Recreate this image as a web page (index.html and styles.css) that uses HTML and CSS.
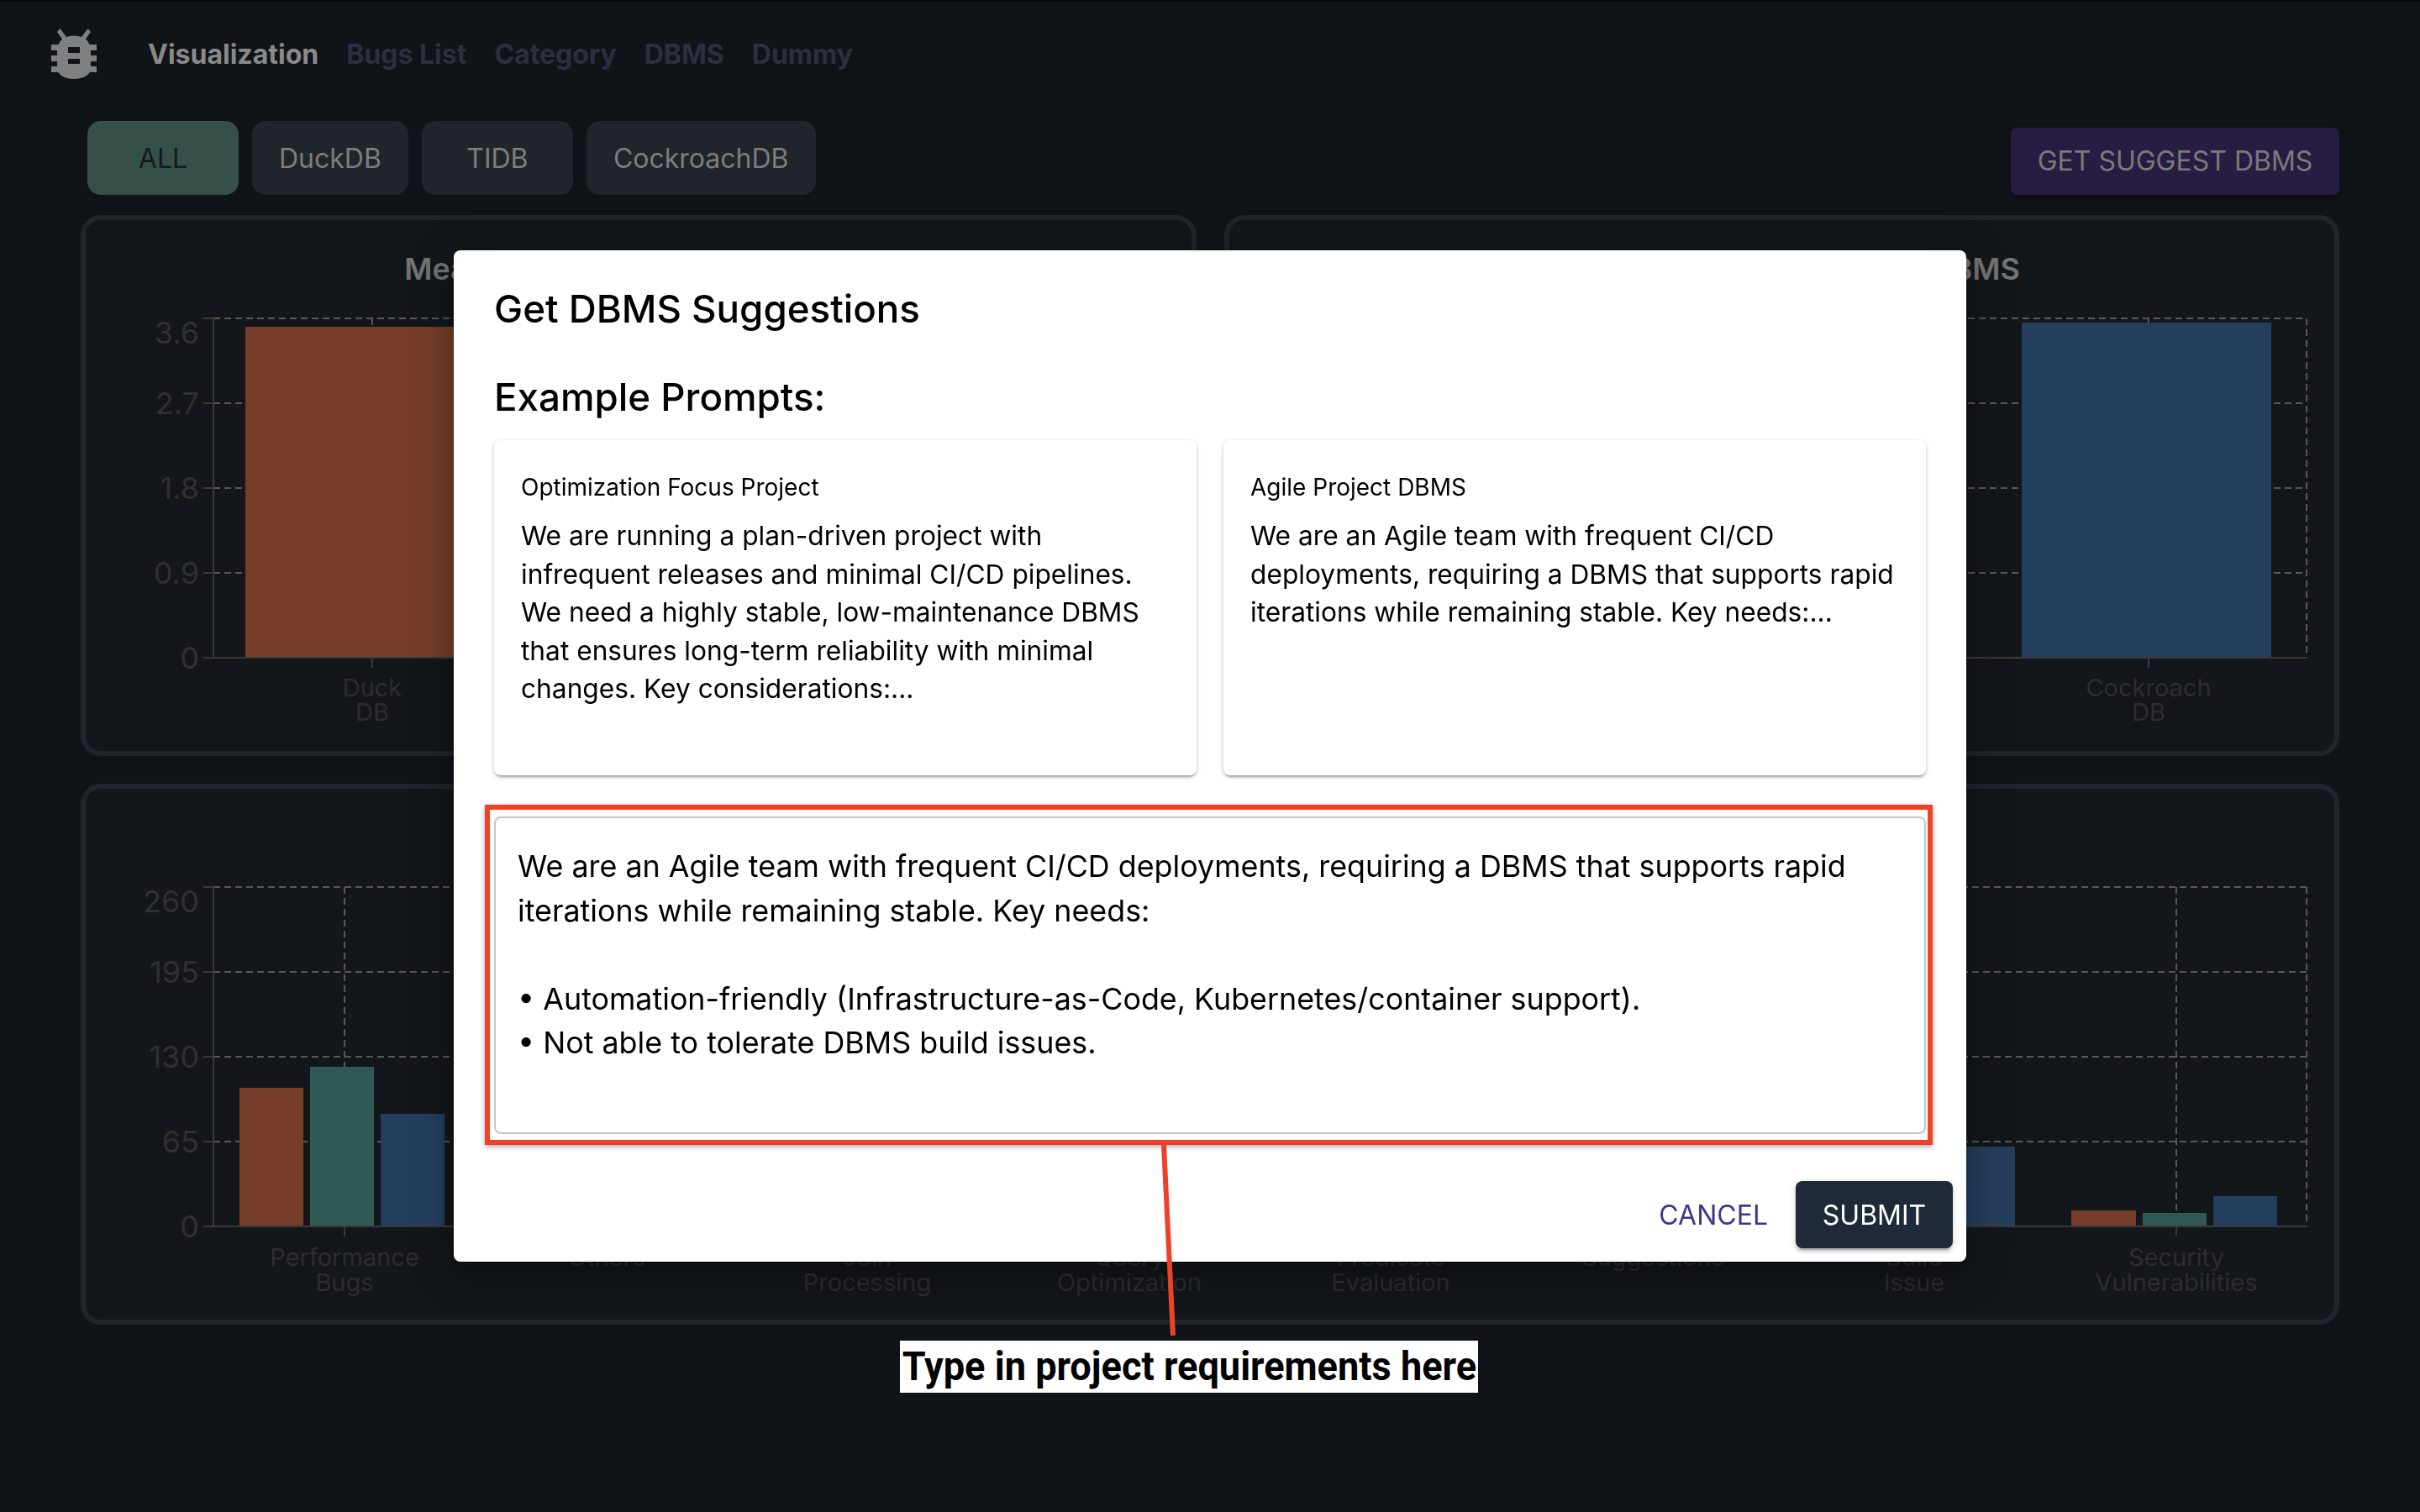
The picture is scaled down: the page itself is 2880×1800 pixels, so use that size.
FILE: index.html
```html
<!DOCTYPE html>
<html>
<head>
    <title>DBMS Bugs Visualization</title>
    <link rel="stylesheet" href="styles.css">
</head>
<body>
    <nav class="navbar">
        <svg class="logo" viewBox="0 0 54 60">
            <path fill-rule="evenodd" d="M7 4 L10.500 0 L18 10 Q22 8.500 27 8.500 Q32 8.500 36 10 L43.500 0 L47 4 L41 12.500 Q44 15 45.500 19 L54 19 L54 26 L47 26 L47 32 L54 32 L54 39 L47 39 L47 45 L54 45 L54 52 L46 52 Q40 60 27 60 Q14 60 8 52 L0 52 L0 45 L7 45 L7 39 L0 39 L0 32 L7 32 L7 26 L0 26 L0 19 L8.500 19 Q10 15 13 12.500 Z M20 22 L20 29 L34 29 L34 22 Z M20 36 L20 42 L34 42 L34 36 Z"/>
        </svg>
        <a class="nav-link active">Visualization</a>
        <a class="nav-link">Bugs List</a>
        <a class="nav-link">Category</a>
        <a class="nav-link">DBMS</a>
        <a class="nav-link">Dummy</a>
    </nav>

    <div class="toolbar">
        <div class="filters">
            <button class="filter selected">ALL</button>
            <button class="filter">DuckDB</button>
            <button class="filter">TIDB</button>
            <button class="filter">CockroachDB</button>
        </div>
        <button class="suggest-btn">GET SUGGEST DBMS</button>
    </div>

    <div class="charts">
        <section class="chart-card">
            <h3 class="chart-title">Mean Time to Fix Bugs (in Days)</h3>
            <svg class="chart" viewBox="102 338 1316 556">
                <path class="grid" d="M254 379H1385M254 480H1385M254 581H1385M254 682H1385M443 379V783M820 379V783M1197 379V783M1385 379V783"/>
                <rect class="bar orange" x="292" y="389" width="298" height="394"/>
                <path class="axis" d="M242 379H254V783M242 480H254M242 581H254M242 682H254M242 783H1385M443 783V795"/>
                <text class="y-label" x="237" y="396">3.6</text>
                <text class="y-label" x="237" y="480">2.7</text>
                <text class="y-label" x="237" y="581">1.8</text>
                <text class="y-label" x="237" y="682">0.9</text>
                <text class="y-label" x="237" y="783">0</text>
                <text class="x-label" x="443" y="829">Duck</text>
                <text class="x-label" x="443" y="858">DB</text>
            </svg>
        </section>
        <section class="chart-card">
            <h3 class="chart-title">Number of Bugs Found by DBMS</h3>
            <svg class="chart" viewBox="1463 338 1316 556">
                <path class="grid" d="M1614 379H2745M1614 480H2745M1614 581H2745M1614 682H2745M2557 379V783M2745 379V783"/>
                <rect class="bar blue" x="2406" y="384" width="297" height="399"/>
                <path class="axis" d="M1614 783H2745M2557 783V795"/>
                <text class="x-label" x="2557" y="829">Cockroach</text>
                <text class="x-label" x="2557" y="858">DB</text>
            </svg>
        </section>
        <section class="chart-card wide">
            <svg class="chart wide-chart" viewBox="102 1015 2676 556">
                <path class="grid" d="M254 1056H2745M254 1157H2745M254 1258H2745M254 1359H2745M410 1056V1460M2590 1056V1460M2745 1056V1460"/>
                <rect class="bar orange" x="285" y="1295" width="76" height="165"/>
                <rect class="bar green" x="369" y="1270" width="76" height="190"/>
                <rect class="bar blue" x="453" y="1326" width="76" height="134"/>
                <rect class="bar blue" x="2322" y="1365" width="76" height="95"/>
                <rect class="bar orange" x="2465" y="1441" width="77" height="19"/>
                <rect class="bar green" x="2550" y="1444" width="76" height="16"/>
                <rect class="bar blue" x="2634" y="1424" width="76" height="36"/>
                <path class="axis" d="M242 1056H254V1460M242 1157H254M242 1258H254M242 1359H254M242 1460H2745M410 1460V1472M2590 1460V1472"/>
                <text class="y-label" x="237" y="1073">260</text>
                <text class="y-label" x="237" y="1157">195</text>
                <text class="y-label" x="237" y="1258">130</text>
                <text class="y-label" x="237" y="1359">65</text>
                <text class="y-label" x="237" y="1460">0</text>
                <text class="x-label" x="410" y="1506.500">Performance</text>
                <text class="x-label" x="410" y="1536.500">Bugs</text>
                <text class="x-label" x="722" y="1506.500">Others</text>
                <text class="x-label" x="1032" y="1506.500">Join</text>
                <text class="x-label" x="1032" y="1536.500">Processing</text>
                <text class="x-label" x="1344" y="1506.500">Query</text>
                <text class="x-label" x="1344" y="1536.500">Optimization</text>
                <text class="x-label" x="1655" y="1506.500">Predicate</text>
                <text class="x-label" x="1655" y="1536.500">Evaluation</text>
                <text class="x-label" x="1967" y="1506.500">Suggestions</text>
                <text class="x-label" x="2278" y="1506.500">Build</text>
                <text class="x-label" x="2278" y="1536.500">Issue</text>
                <text class="x-label" x="2590" y="1506.500">Security</text>
                <text class="x-label" x="2590" y="1536.500">Vulnerabilities</text>
            </svg>
        </section>
    </div>

    <div class="dialog-layer">
        <div class="dialog">
            <h2 class="dialog-title">Get DBMS Suggestions</h2>
            <h2 class="dialog-subtitle">Example Prompts:</h2>
            <div class="prompts">
                <div class="prompt-card">
                    <div class="prompt-name">Optimization Focus Project</div>
                    <p class="prompt-text">We are running a plan-driven project with infrequent releases and minimal CI/CD pipelines. We need a highly stable, low-maintenance DBMS that ensures long-term reliability with minimal changes. Key considerations:...</p>
                </div>
                <div class="prompt-card">
                    <div class="prompt-name">Agile Project DBMS</div>
                    <p class="prompt-text">We are an Agile team with frequent CI/CD deployments, requiring a DBMS that supports rapid iterations while remaining stable. Key needs:...</p>
                </div>
            </div>
            <div class="prompt-input">We are an Agile team with frequent CI/CD deployments, requiring a DBMS that supports rapid iterations while remaining stable. Key needs:

• Automation-friendly (Infrastructure-as-Code, Kubernetes/container support).
• Not able to tolerate DBMS build issues.</div>
            <div class="dialog-actions">
                <button class="cancel-btn">CANCEL</button>
                <button class="submit-btn">SUBMIT</button>
            </div>
        </div>
    </div>

    <div class="callout-box"></div>
    <svg class="callout-line" viewBox="0 0 20 230"><line x1="4" y1="0" x2="15" y2="227"/></svg>
    <div class="callout-label"><span class="callout-text">Type in project requirements here</span></div>
</body>
</html>
```

FILE: styles.css
```css
* {
    box-sizing: border-box;
}
html, body {
    margin: 0;
    height: 1800px;
    overflow: hidden;
}
body {
    position: relative;
    background-color: #101419;
    font-family: Inter, "Liberation Sans", sans-serif;
}
button {
    font-family: inherit;
    border: none;
    cursor: pointer;
}

/* nav */
.navbar {
    display: flex;
    align-items: center;
    height: 126px;
    padding-left: 61px;
    gap: 33px;
    border-top: 2px solid #05070a;
}
.logo {
    width: 54px;
    height: 60px;
    margin-right: 28px;
    fill: #808080;
}
.nav-link {
    font-size: 32px;
    font-weight: 700;
    color: #2b303c;
}
.nav-link.active {
    color: #8a8a8a;
}

/* filters */
.toolbar {
    display: flex;
    justify-content: space-between;
    align-items: flex-end;
    height: 88px;
    margin-top: 18px;
    padding: 0 96px 0 104px;
}
.filters {
    display: flex;
    gap: 16px;
}
.filter {
    min-width: 180px;
    height: 88px;
    padding: 0 32px;
    font-size: 32px;
    color: #7d7d7d;
    background-color: #20252b;
    border-radius: 16px;
}
.filter.selected {
    color: #15191c;
    background-color: #345048;
}
.suggest-btn {
    height: 80px;
    width: 391px;
    padding-bottom: 2px;
    font-size: 32px;
    color: #7a7a7a;
    background-color: #271c42;
    border-radius: 8px;
    box-shadow: 0 4px 10px rgba(0, 0, 0, 0.3);
}

/* charts */
.charts {
    display: grid;
    grid-template-columns: 1328px 1327px;
    gap: 33px;
    margin: 24px 96px 0;
}
.chart-card {
    height: 644px;
    padding-top: 40px;
    background-color: #13171b;
    border: 6px solid #1f252b;
    border-radius: 24px;
    overflow: hidden;
}
.chart-card.wide {
    grid-column: 1 / 3;
    padding-top: 76px;
}
.chart-title {
    margin: 0;
    font-size: 36px;
    line-height: 36px;
    font-weight: 600;
    color: #747474;
    text-align: center;
}
.chart {
    display: block;
    width: 1316px;
    height: 556px;
}
.wide-chart {
    width: 2676px;
}
.grid {
    fill: none;
    stroke: #585858;
    stroke-width: 2;
    stroke-dasharray: 8 5;
}
.axis {
    fill: none;
    stroke: #393939;
    stroke-width: 2;
}
.bar.orange {
    fill: #763e2a;
}
.bar.green {
    fill: #2f5a54;
}
.bar.blue {
    fill: #243f5e;
}
.y-label {
    font-size: 36px;
    fill: #303030;
    text-anchor: end;
    dominant-baseline: central;
}
.x-label {
    font-size: 29px;
    fill: #2c2d30;
    text-anchor: middle;
}

/* dialog */
.dialog-layer {
    position: fixed;
    inset: 0;
    display: flex;
    align-items: center;
    justify-content: center;
}
.dialog {
    width: 1800px;
    height: 1204px;
    padding: 40px 48px 16px;
    background-color: #fff;
    border-radius: 8px;
    box-shadow: 0 11px 15px -7px rgba(0, 0, 0, 0.2), 0 24px 38px 3px rgba(0, 0, 0, 0.14), 0 9px 50px 8px rgba(0, 0, 0, 0.2);
}
.dialog-title, .dialog-subtitle {
    margin: 0;
    font-size: 45.7px;
    line-height: 60px;
    font-weight: 500;
    color: #000;
}
.dialog-subtitle {
    margin-top: 45px;
}
.prompts {
    display: grid;
    grid-template-columns: 836px 836px;
    gap: 32px;
    margin-top: 21px;
}
.prompt-card {
    height: 399px;
    padding: 36px 32px 0;
    border-radius: 8px;
    box-shadow: 0 4px 2px -2px rgba(0, 0, 0, 0.2), 0 2px 4px rgba(0, 0, 0, 0.14), 0 2px 6px rgba(0, 0, 0, 0.12);
}
.prompt-name {
    font-size: 28px;
    line-height: 40px;
    color: #000;
}
.prompt-text {
    margin: 15px 0 0;
    font-size: 31.7px;
    line-height: 45.6px;
    color: #000;
}
.prompt-input {
    height: 378px;
    margin-top: 49px;
    padding: 31px 26px 0;
    font-size: 35.85px;
    line-height: 52.6px;
    white-space: pre-line;
    color: #000;
    border: 2px solid #c4c4c4;
    border-radius: 8px;
}
.dialog-actions {
    display: flex;
    justify-content: flex-end;
    align-items: center;
    gap: 33px;
    margin: 56px -32px 0 0;
}
.cancel-btn {
    padding: 0;
    font-size: 32px;
    color: #43338c;
    background: none;
}
.submit-btn {
    width: 187px;
    height: 80px;
    font-size: 32px;
    color: #fff;
    background-color: #1f2937;
    border-radius: 8px;
    box-shadow: 0 6px 2px -4px rgba(0, 0, 0, 0.2), 0 4px 4px rgba(0, 0, 0, 0.14), 0 2px 10px rgba(0, 0, 0, 0.12);
}

/* annotation drawn over the screenshot */
.callout-box {
    position: absolute;
    left: 577px;
    top: 958px;
    width: 1723px;
    height: 405px;
    border: 6px solid #ee4128;
    box-shadow: 0 2px 6px rgba(0, 0, 0, 0.35);
}
.callout-line {
    position: absolute;
    left: 1381px;
    top: 1363px;
    width: 20px;
    height: 230px;
}
.callout-line line {
    stroke: #ee4128;
    stroke-width: 6;
}
.callout-label {
    position: absolute;
    left: 1071px;
    top: 1596px;
    display: flex;
    justify-content: center;
    width: 688px;
    height: 62px;
    overflow: hidden;
    background-color: #fff;
}
.callout-text {
    flex: none;
    font-family: Roboto, "Liberation Sans", sans-serif;
    font-size: 48px;
    line-height: 62px;
    font-weight: 700;
    white-space: nowrap;
    color: #000;
    transform: scaleX(0.94);
}
```
